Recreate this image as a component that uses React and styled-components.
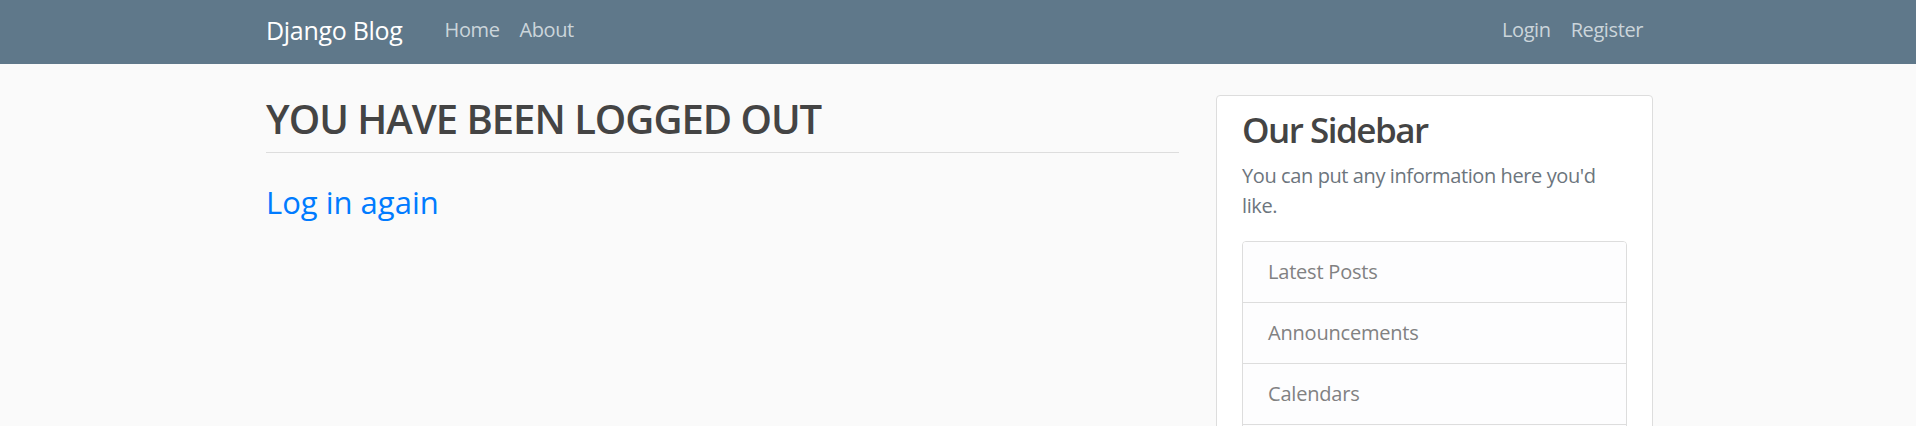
import React from 'react'
import styled, { createGlobalStyle } from 'styled-components'

const GlobalStyle = createGlobalStyle`
  html, body {
    margin: 0;
    padding: 0;
  }
  body {
    background: #fafafa;
    color: #333333;
    font-family: 'Open Sans', 'Noto Sans', sans-serif;
  }
`

const sidebarLinks = ['Latest Posts', 'Announcements', 'Calendars', 'etc']

const App = () => {
  return (
    <>
      <GlobalStyle />
      <Header>
        <NavInner>
          <Brand href="#">Django Blog</Brand>
          <NavGroup>
            <NavLink href="#">Home</NavLink>
            <NavLink href="#">About</NavLink>
          </NavGroup>
          <NavGroup $right>
            <NavLink href="#">Login</NavLink>
            <NavLink href="#">Register</NavLink>
          </NavGroup>
        </NavInner>
      </Header>
      <Main>
        <Content>
          <Title>YOU HAVE BEEN LOGGED OUT</Title>
          <AgainLink href="#">Log in again</AgainLink>
        </Content>
        <Sidebar>
          <SidebarTitle>Our Sidebar</SidebarTitle>
          <Muted>You can put any information here you'd like.</Muted>
          <ListGroup>
            {sidebarLinks.map((item) => (
              <ListItem key={item}>{item}</ListItem>
            ))}
          </ListGroup>
        </Sidebar>
      </Main>
    </>
  )
}

const Header = styled.header`
  background-color: #5f788a;
  height: 64px;
  box-sizing: border-box;
  padding: 5px 0 9px;
`
const NavInner = styled.nav`
  width: 1387px;
  margin: 0 auto;
  padding-left: 3px;
  height: 50px;
  display: flex;
  align-items: center;
`
const Brand = styled.a`
  color: #fff;
  font-size: 25px;
  line-height: 30px;
  letter-spacing: -0.3px;
  text-decoration: none;
  margin-right: 32px;
`
const NavGroup = styled.div`
  display: flex;
  margin-left: ${(p) => (p.$right ? 'auto' : '0')};
`
const NavLink = styled.a`
  color: #cbd5db;
  font-size: 20px;
  line-height: 30px;
  letter-spacing: -0.4px;
  padding: 10px;
  text-decoration: none;
`
const Main = styled.main`
  width: 1387px;
  margin: 0 auto;
  padding: 31px 0 0 3px;
  display: grid;
  grid-template-columns: 913px 437px;
  column-gap: 37px;
  align-items: start;
`
const Content = styled.div`
  display: flex;
  flex-direction: column;
`
const Title = styled.h2`
  margin: 0;
  font-size: 40px;
  line-height: 48px;
  font-weight: 600;
  letter-spacing: -1px;
  color: #444444;
  padding-bottom: 9px;
  border-bottom: 1px solid #dddddd;
`
const AgainLink = styled.a`
  margin-top: 31px;
  font-size: 31px;
  line-height: 37px;
  color: #007bff;
  text-decoration: none;
`
const Sidebar = styled.aside`
  background: #ffffff;
  border: 1px solid #dddddd;
  border-radius: 4px;
  padding: 13px 25px 20px;
`
const SidebarTitle = styled.h3`
  margin: 0 0 10px;
  font-size: 35px;
  line-height: 42px;
  font-weight: 600;
  letter-spacing: -1.5px;
  color: #444444;
`
const Muted = styled.p`
  margin: 0 0 20px;
  font-size: 20px;
  line-height: 30px;
  letter-spacing: -0.4px;
  color: #6c757d;
`
const ListGroup = styled.ul`
  list-style: none;
  margin: 0;
  padding: 0;
  border: 1px solid #dddddd;
  border-radius: 4px;
  overflow: hidden;
`
const ListItem = styled.li`
  padding: 15px 25px;
  font-size: 20px;
  line-height: 30px;
  letter-spacing: -0.2px;
  color: #818182;
  background: #fdfdfe;
  & + & {
    border-top: 1px solid #dddddd;
  }
`

export default App
